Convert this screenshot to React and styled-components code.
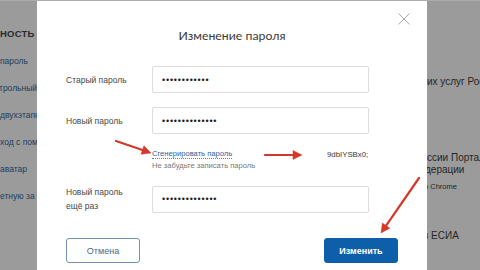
import React from 'react';
import styled, { createGlobalStyle } from 'styled-components';

const Global = createGlobalStyle`
  html, body { margin: 0; padding: 0; }
  body {
    width: 480px; height: 270px; overflow: hidden;
    background: #9b9b9b;
    font-family: "Liberation Sans", Arial, sans-serif;
  }
`;

const Page = styled.div`
  position: relative;
  width: 480px;
  height: 270px;
  box-sizing: border-box;
  border-top: 1px solid #adadad;
  overflow: hidden;
  display: flex;
  align-items: stretch;
`;

const Side = styled.div`
  width: 37px;
  flex: none;
  overflow: hidden;
  white-space: nowrap;
  display: flex;
  flex-direction: column;
  padding-top: 26px;
`;

const SideHeading = styled.div`
  font-size: 9.5px;
  line-height: 14px;
  font-weight: 700;
  color: #2a2a2a;
  letter-spacing: 0.2px;
`;

const SideLink = styled.div`
  margin-top: 13px;
  font-size: 8.5px;
  line-height: 14px;
  color: #203d5e;
  text-indent: ${p => p.$cut || 0}px;
`;

const Modal = styled.div`
  width: 390px;
  flex: none;
  background: #fff;
  display: flex;
  flex-direction: column;
`;

const Header = styled.div`
  display: grid;
  grid-template-columns: 1fr auto 1fr;
  align-items: start;
  padding: 12px 17px 0;
`;

const Title = styled.h2`
  grid-column: 2;
  margin: 15px 0 0;
  font-family: Lato, "Liberation Sans", sans-serif;
  font-weight: 400;
  font-size: 12.3px;
  line-height: 16px;
  color: #3a3a3a;
`;

const Close = styled.button`
  grid-column: 3;
  justify-self: end;
  width: 12px;
  height: 12px;
  padding: 0;
  border: 0;
  background: none;
  display: block;
`;

const Form = styled.div`
  display: flex;
  flex-direction: column;
  padding: 0 29px;
  margin-top: 22px;
`;

const Row = styled.div`
  display: grid;
  grid-template-columns: 86px 217px;
  align-items: center;
  margin-top: ${p => p.$gap || 0}px;
`;

const Label = styled.div`
  font-size: 8.5px;
  line-height: 14px;
  color: #474747;
`;

const Field = styled.div`
  box-sizing: border-box;
  height: 27px;
  border: 1px solid #dcdcdc;
  border-radius: 2px;
  padding-left: 9px;
  display: flex;
  align-items: center;
  font-size: 9px;
  letter-spacing: 0.8px;
  color: #1e1e1e;
`;

const Gen = styled.div`
  grid-column: 2;
  display: flex;
  flex-direction: column;
`;

const GenLine = styled.div`
  display: grid;
  grid-template-columns: 175px auto;
  align-items: center;
  height: 12px;
`;

const GenLink = styled.a`
  justify-self: start;
  font-size: 7.6px;
  line-height: 9px;
  color: #2f6197;
  text-decoration: none;
  border-bottom: 1px dotted #5a86b8;
`;

const GenValue = styled.span`
  font-size: 7.8px;
  color: #3a3a3a;
`;

const Hint = styled.div`
  font-size: 7.6px;
  line-height: 12px;
  color: #777;
`;

const Buttons = styled.div`
  display: flex;
  justify-content: space-between;
  padding: 0 29px;
  margin-top: 25px;
`;

const Button = styled.button`
  box-sizing: border-box;
  width: 74px;
  height: 25px;
  border-radius: 3px;
  font-family: "Liberation Sans", Arial, sans-serif;
  font-size: 9px;
  cursor: pointer;
  border: 1px solid ${p => (p.$primary ? '#0e5fa9' : '#7392b0')};
  background: ${p => (p.$primary ? '#0e5fa9' : '#fff')};
  color: ${p => (p.$primary ? '#fff' : '#46698d')};
  font-weight: ${p => (p.$primary ? 700 : 400)};
`;

const Right = styled.div`
  flex: 1;
  min-width: 0;
  overflow: hidden;
  white-space: nowrap;
  display: flex;
  flex-direction: column;
  align-items: flex-start;
  padding-top: 75px;
  color: #262626;
`;

const RightLine = styled.div`
  margin-top: ${p => p.$gap || 0}px;
  font-size: ${p => p.$size || 10}px;
  line-height: 12px;
  text-indent: ${p => p.$cut || 0}px;
`;

const Annotations = styled.svg`
  position: absolute;
  left: 0;
  top: 0;
  pointer-events: none;
`;

function Arrow({ x1, y1, x2, y2 }) {
  const dx = x2 - x1;
  const dy = y2 - y1;
  const len = Math.hypot(dx, dy);
  const ux = dx / len;
  const uy = dy / len;
  const hl = 9;
  const hw = 4.5;
  const bx = x2 - ux * hl;
  const by = y2 - uy * hl;
  const p1 = `${bx - uy * hw},${by + ux * hw}`;
  const p2 = `${bx + uy * hw},${by - ux * hw}`;
  return (
    <g fill="#d4382b" stroke="#d4382b">
      <line x1={x1} y1={y1} x2={bx} y2={by} strokeWidth="2.2" strokeLinecap="round" />
      <polygon points={`${x2},${y2} ${p1} ${p2}`} strokeWidth="0.5" />
    </g>
  );
}

export default function App() {
  return (
    <>
      <Global />
      <Page>
        <Side>
          <SideHeading>НОСТЬ</SideHeading>
          <SideLink>пароль</SideLink>
          <SideLink $cut={-1}>трольный</SideLink>
          <SideLink>двухэтапн</SideLink>
          <SideLink>ход с пом</SideLink>
          <SideLink>аватар</SideLink>
          <SideLink>етную за</SideLink>
        </Side>

        <Modal>
          <Header>
            <Title>Изменение пароля</Title>
            <Close aria-label="Закрыть">
              <svg width="12" height="12" viewBox="0 0 12 12">
                <path d="M0.5 0.5 L11.5 11.5 M11.5 0.5 L0.5 11.5" stroke="#a9a9a9" strokeWidth="1" fill="none" />
              </svg>
            </Close>
          </Header>

          <Form>
            <Row>
              <Label>Старый пароль</Label>
              <Field>••••••••••••</Field>
            </Row>
            <Row $gap={14}>
              <Label>Новый пароль</Label>
              <Field>••••••••••••••</Field>
            </Row>
            <Row $gap={14}>
              <Gen>
                <GenLine>
                  <GenLink href="#">Сгенерировать пароль</GenLink>
                  <GenValue>9dbIYSBx0;</GenValue>
                </GenLine>
                <Hint>Не забудьте записать пароль</Hint>
              </Gen>
            </Row>
            <Row $gap={13}>
              <Label>Новый пароль<br />ещё раз</Label>
              <Field>••••••••••••••</Field>
            </Row>
          </Form>

          <Buttons>
            <Button>Отмена</Button>
            <Button $primary>Изменить</Button>
          </Buttons>
        </Modal>

        <Right>
          <RightLine>их услуг России</RightLine>
          <RightLine $gap={64}>ссии Портал</RightLine>
          <RightLine $cut={-2}>дерации</RightLine>
          <RightLine $gap={5} $size={7.5} $cut={-3}>о Chrome</RightLine>
          <RightLine $gap={37} $cut={-4}>в ЕСИА</RightLine>
        </Right>

        <Annotations width="480" height="270" viewBox="0 0 480 270">
          <Arrow x1={116} y1={140} x2={151} y2={152} />
          <Arrow x1={265} y1={154} x2={302} y2={154} />
          <Arrow x1={419} y1={177} x2={381} y2={232} />
        </Annotations>
      </Page>
    </>
  );
}
